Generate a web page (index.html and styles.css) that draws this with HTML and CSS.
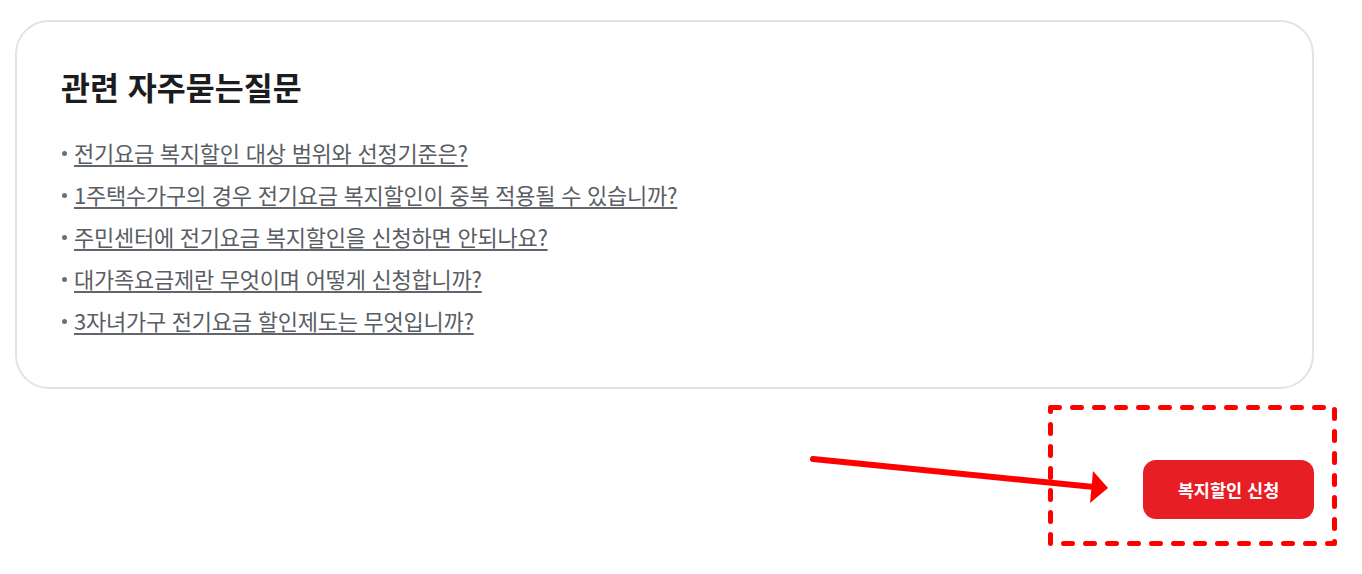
FILE: index.html
```html
<!DOCTYPE html>
<html lang="ko">
<head>
<meta charset="utf-8">
<link rel="stylesheet" href="styles.css">
</head>
<body>
<div class="page">
  <section class="faq-card">
    <h2 class="faq-title">관련 자주묻는질문</h2>
    <ul class="faq-list">
      <li><a href="#">전기요금 복지할인 대상 범위와 선정기준은?</a></li>
      <li><a href="#">1주택수가구의 경우 전기요금 복지할인이 중복 적용될 수 있습니까?</a></li>
      <li><a href="#">주민센터에 전기요금 복지할인을 신청하면 안되나요?</a></li>
      <li><a href="#">대가족요금제란 무엇이며 어떻게 신청합니까?</a></li>
      <li><a href="#">3자녀가구 전기요금 할인제도는 무엇입니까?</a></li>
    </ul>
  </section>
  <div class="actions">
    <button class="apply-btn" type="button">복지할인 신청</button>
  </div>
</div>
<svg class="annotation" width="1362" height="574" viewBox="0 0 1362 574">
  <rect x="1050.5" y="407.5" width="284" height="136" fill="none" stroke="#ff0000" stroke-width="5" stroke-dasharray="9 13" stroke-linecap="round" stroke-linejoin="round"/>
  <line x1="813" y1="459" x2="1094" y2="487" stroke="#ff0000" stroke-width="6" stroke-linecap="round"/>
  <polygon points="1108,488 1093,471 1090,503" fill="#ff0000"/>
</svg>
</body>
</html>
```
FILE: styles.css
```css
html, body {
  margin: 0;
  padding: 0;
  background: #ffffff;
}
body {
  font-family: "Noto Sans CJK KR", "Noto Sans", sans-serif;
  position: relative;
  width: 1362px;
  height: 574px;
  overflow: hidden;
}
.page {
  padding: 20px 48px 0 15px;
}
.faq-card {
  box-sizing: border-box;
  width: 1299px;
  height: 369px;
  border: 2px solid #dfe3ea;
  border-radius: 34px;
  padding: 42px 44px 0 44px;
}
.faq-title {
  margin: 0;
  font-size: 31.5px;
  font-weight: 700;
  color: #1c1c1e;
  line-height: 44px;
  letter-spacing: 0;
}
.faq-list {
  list-style: none;
  margin: 24px 0 0 0;
  padding: 0;
}
.faq-list li {
  position: relative;
  padding-left: 13px;
  height: 42px;
  line-height: 40px;
  font-size: 22px;
  color: #5a5d63;
}
.faq-list li::before {
  content: "";
  position: absolute;
  left: 1px;
  top: 19px;
  width: 5px;
  height: 5px;
  border-radius: 50%;
  background: #6c6f75;
}
.faq-list a {
  color: #5a5d63;
  text-decoration: underline;
  text-decoration-color: #62656b;
  text-underline-offset: 3px;
  text-decoration-thickness: 2px;
  letter-spacing: -0.25px;
}
.actions {
  display: flex;
  justify-content: flex-end;
  width: 1299px;
  margin-top: 71px;
}
.apply-btn {
  width: 171px;
  height: 59px;
  border: none;
  border-radius: 13px;
  background: #e81e25;
  color: #ffffff;
  font-family: "Noto Sans CJK KR", "Noto Sans", sans-serif;
  font-size: 17.5px;
  font-weight: 700;
  letter-spacing: 0;
  cursor: pointer;
}
.annotation {
  position: absolute;
  left: 0;
  top: 0;
  pointer-events: none;
}
```
